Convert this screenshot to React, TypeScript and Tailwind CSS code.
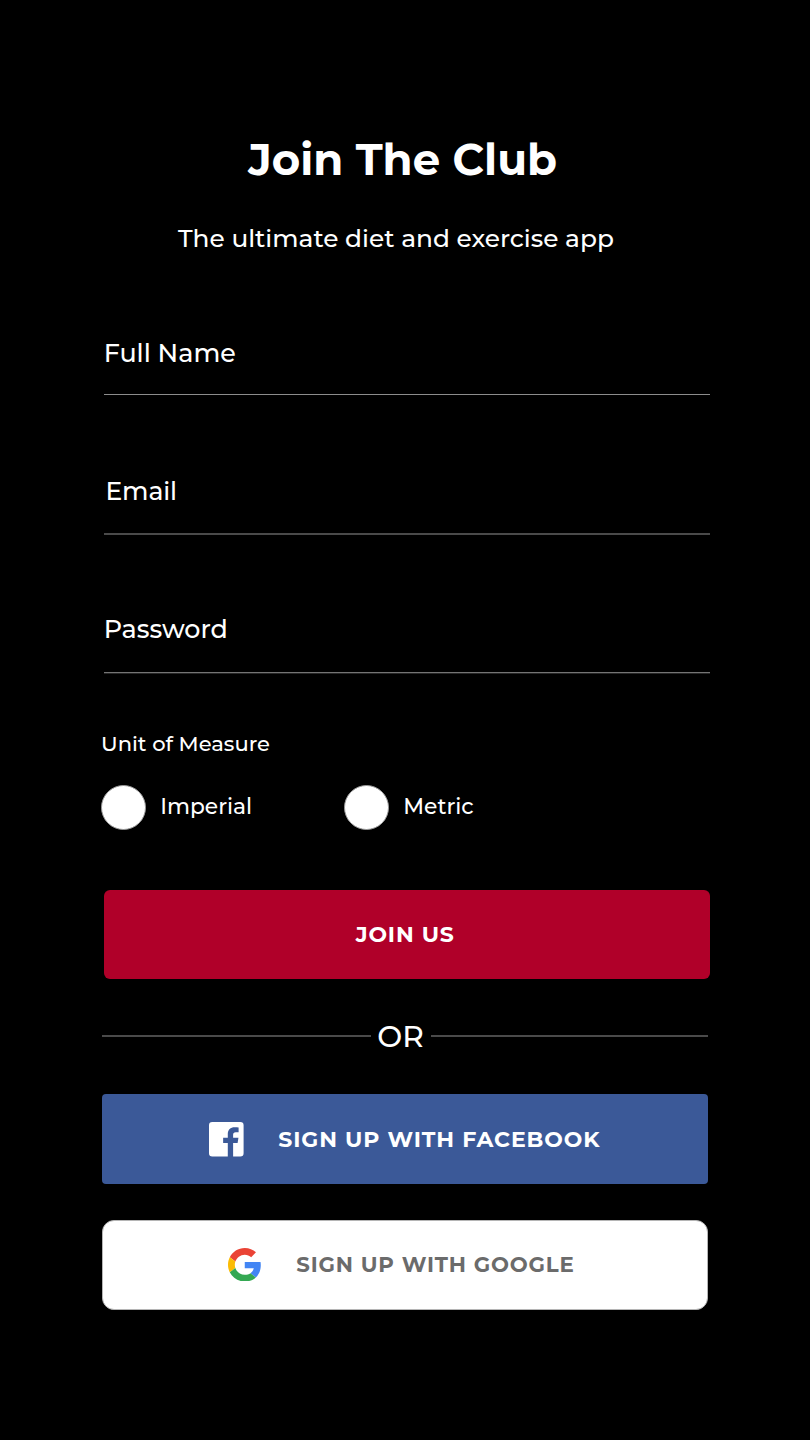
function FacebookIcon() {
  return (
    <svg viewBox="0 0 104 104" className="mt-px h-[34.6px] w-[34.6px] shrink-0" aria-hidden="true">
      <path
        fill="#fff"
        d="M10 0H94Q104 0 104 10V94Q104 104 94 104H72.5V63.5H86L88.5 47.5H72.5V38C72.5 33.2 74.5 30.5 80.5 30.5H89V16.5C86 16 81.5 15.5 77 15.5C64.5 15.5 56.5 23 56.5 36V47.5H42.5V63.5H56.5V104H10Q0 104 0 94V10Q0 0 10 0Z"
      />
    </svg>
  );
}

function GoogleIcon() {
  return (
    <svg viewBox="0 0 48 48" className="h-[33.5px] w-[33.5px] shrink-0" aria-hidden="true">
      <path fill="#EA4335" d="M24 9.5c3.54 0 6.71 1.22 9.21 3.6l6.85-6.85C35.9 2.38 30.47 0 24 0 14.62 0 6.51 5.38 2.56 13.22l7.98 6.19C12.43 13.72 17.74 9.5 24 9.5z" />
      <path fill="#4285F4" d="M46.98 24.55c0-1.57-.15-3.09-.38-4.55H24v9.02h12.94c-.58 2.96-2.26 5.48-4.78 7.18l7.73 6c4.51-4.18 7.09-10.36 7.09-17.65z" />
      <path fill="#FBBC05" d="M10.53 28.59c-.48-1.45-.76-2.99-.76-4.59s.27-3.14.76-4.59l-7.98-6.19C.92 16.46 0 20.12 0 24c0 3.88.92 7.54 2.56 10.78l7.97-6.19z" />
      <path fill="#34A853" d="M24 48c6.48 0 11.93-2.13 15.89-5.81l-7.73-6c-2.15 1.45-4.92 2.3-8.16 2.3-6.26 0-11.57-4.22-13.47-9.91l-7.98 6.19C6.51 42.62 14.62 48 24 48z" />
    </svg>
  );
}

export default function App() {
  return (
    <main className="flex h-[1440px] w-[810px] flex-col overflow-hidden bg-black pt-[133px] font-['Montserrat','Inter',sans-serif] font-medium whitespace-nowrap text-white">
      <h1 className="pl-[248.2px] text-[43.5px] leading-[54px] font-bold">Join The Club</h1>
      <p className="mt-[35px] pl-[178px] text-[24.85px] leading-8">The ultimate diet and exercise app</p>

      <form className="flex flex-col" onSubmit={(e) => e.preventDefault()}>
        <label className="mt-[83px] pl-[103.7px] text-[25.4px] leading-8">Full Name</label>
        <div className="mt-[25px] ml-[103.5px] h-px w-[606px] bg-[#8c8c8c]" />

        <label className="mt-20 pl-[105.5px] text-[25px] leading-8 tracking-[-0.15px]">Email</label>
        <div className="mt-[26px] ml-[103.5px] h-0.5 w-[606px] bg-[#4a4a4a]" />

        <label className="mt-[78px] pl-[103.7px] text-[25.35px] leading-8">Password</label>
        <div className="mt-[27px] ml-[103.5px] h-0.5 w-[606px] border-b border-[#262626] bg-[#747474]" />

        <p className="mt-14 pl-[101px] text-[21.05px] leading-[28px]">Unit of Measure</p>
        <div className="mt-[27px] flex h-[45px] pl-[101px]">
          <label className="flex w-[243px] gap-[14.3px]">
            <span className="h-[45px] w-[45px] rounded-full border border-[#9a9a9a] bg-white" />
            <span className="text-[21.75px] leading-[42px]">Imperial</span>
          </label>
          <label className="flex gap-[14.3px]">
            <span className="h-[45px] w-[45px] rounded-full border border-[#9a9a9a] bg-white" />
            <span className="text-[21.8px] leading-[42px]">Metric</span>
          </label>
        </div>

        <button className="mt-[59.5px] ml-[103.5px] flex h-[89px] w-[606px] items-center rounded-md bg-[#b00029] pl-[252.2px] text-[22px] font-bold tracking-[0.85px]">
          JOIN US
        </button>
      </form>

      <div className="mt-[37.5px] ml-[102px] flex h-10 w-[606px] items-center">
        <div className="h-0.5 w-[269px] bg-[#4a4a4a]" />
        <span className="w-[59.5px] pl-[6.3px] text-[29.7px] leading-10">OR</span>
        <div className="h-0.5 flex-1 bg-[#4a4a4a]" />
      </div>

      <button className="mt-[38px] ml-[102px] flex h-[89.5px] w-[606px] items-center gap-[34.7px] rounded bg-[#3b5998] pl-[107px] text-[22px] font-bold tracking-[0.92px]">
        <FacebookIcon />
        <span className="pt-px">SIGN UP WITH FACEBOOK</span>
      </button>

      <button className="mt-9 ml-[102px] flex h-[90px] w-[606px] items-center gap-[34.9px] rounded-xl border border-[#b5b5b5] bg-white pl-[124.9px] text-[21.3px] font-bold tracking-[0.84px] text-[#6b6b6b]">
        <GoogleIcon />
        <span>SIGN UP WITH GOOGLE</span>
      </button>
    </main>
  );
}
